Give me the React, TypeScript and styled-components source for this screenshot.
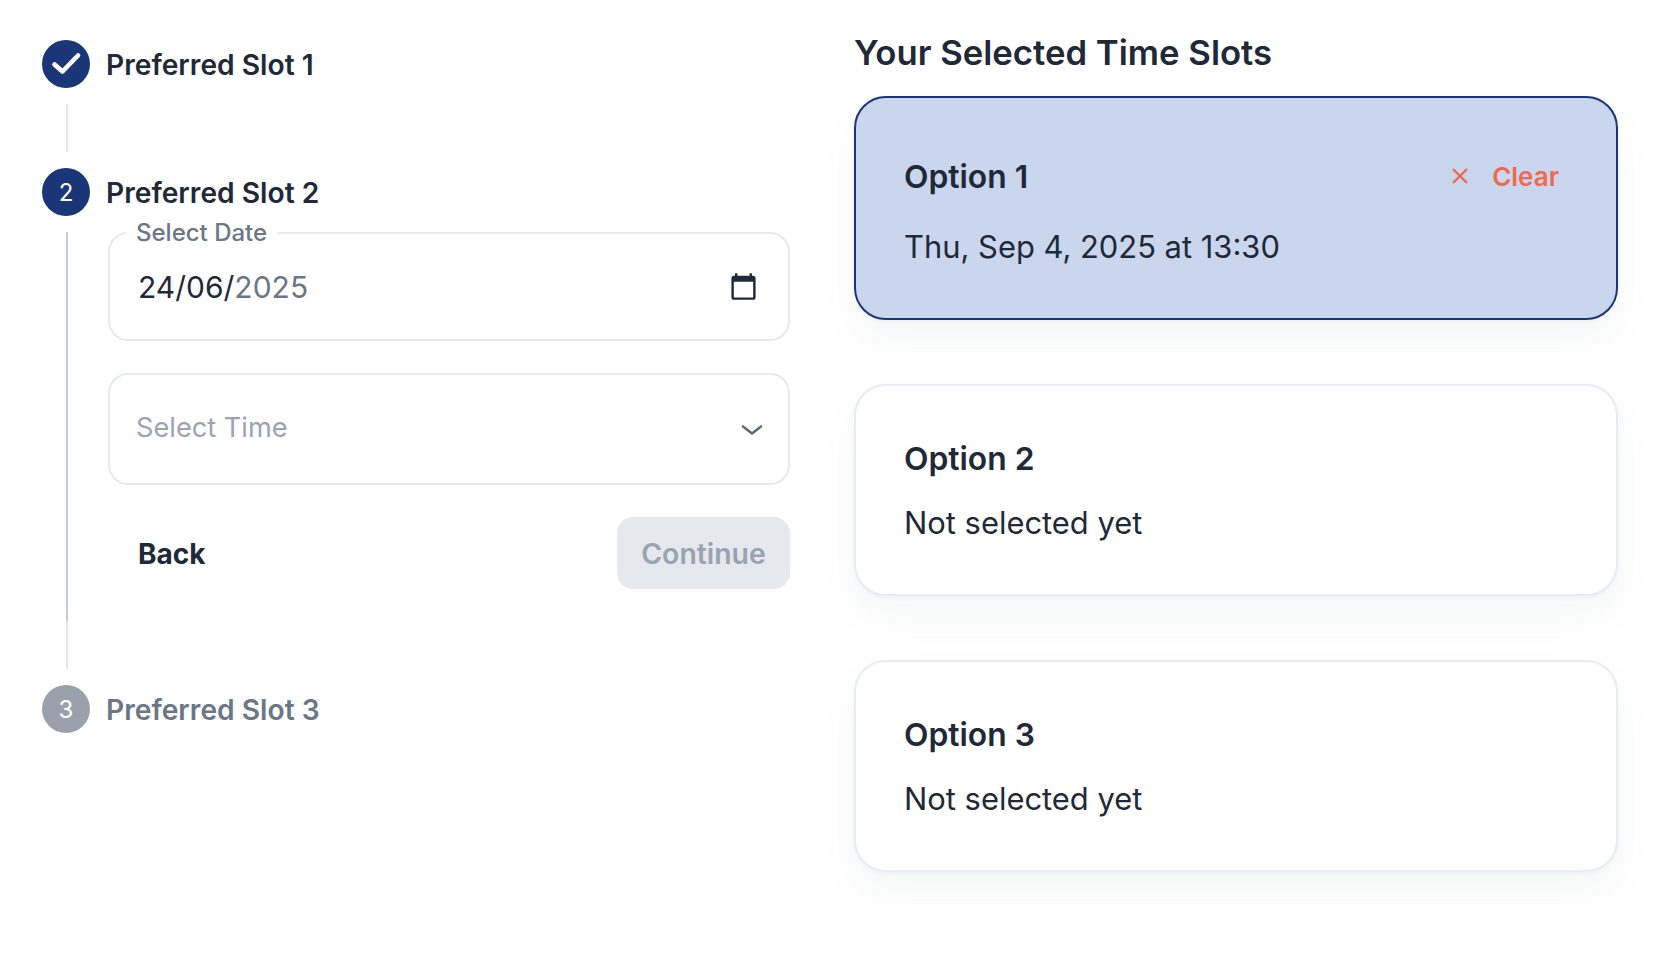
import React from 'react';
import styled, {createGlobalStyle} from 'styled-components';

const Global = createGlobalStyle`
  html, body {
    margin: 0;
    background: #fff;
  }
  * {
    box-sizing: border-box;
  }
  body {
    font-family: Inter, "Liberation Sans", sans-serif;
    color: #1f2937;
  }
`;

const Page = styled.div`
  display: grid;
  grid-template-columns: 748px 764px;
  column-gap: 64px;
  align-items: start;
  min-height: 100vh;
  padding: 32px 0 0 42px;
`;

const Stepper = styled.div`
  display: flex;
  flex-direction: column;
  padding-top: 8px;
`;

const StepHead = styled.div`
  display: flex;
  align-items: center;
  gap: 16px;
  height: 48px;
`;

const Badge = styled.div<{$muted?: boolean}>`
  width: 48px;
  height: 48px;
  border-radius: 50%;
  flex: none;
  display: flex;
  align-items: center;
  justify-content: center;
  background: ${(p) => (p.$muted ? '#9aa1ad' : '#1a3578')};
  color: #fff;
  font-size: 24px;
`;

const StepLabel = styled.div<{$muted?: boolean}>`
  padding-top: 1px;
  font-size: 28.2px;
  font-weight: 600;
  color: ${(p) => (p.$muted ? '#6b7686' : '#1f2937')};
`;

const Connector = styled.div`
  width: 2px;
  height: 48px;
  margin-left: 24px;
  background: #e4e7eb;
`;

const GappedConnector = styled(Connector)`
  margin-top: 16px;
  margin-bottom: 16px;
`;

const TailConnector = styled(Connector)`
  margin-bottom: 16px;
`;

const StepBody = styled.div`
  margin: 16px 0 0 24px;
  padding: 0 0 32px 40px;
  border-left: 2px solid #c6cad1;
  display: flex;
  flex-direction: column;
  gap: 32px;
`;

const Field = styled.div<{$height: number}>`
  position: relative;
  height: ${(p) => p.$height}px;
  border: 2px solid #e6eaef;
  border-radius: 20px;
  display: flex;
  align-items: center;
  justify-content: space-between;
`;

const Legend = styled.span`
  position: absolute;
  left: 16px;
  top: -15px;
  padding: 0 10px;
  background: #fff;
  font-size: 24px;
  line-height: 28px;
  font-weight: 500;
  color: #6b7686;
`;

const DateValue = styled.div`
  margin-left: 28px;
  font-size: 30px;
  color: #1f2937;
`;

const DateRest = styled.span`
  color: #6b7686;
`;

const Placeholder = styled.div`
  margin-left: 26px;
  padding-bottom: 4px;
  font-size: 27.2px;
  color: #9aa3b2;
`;

const CalendarIcon = styled.svg`
  width: 29px;
  height: 29px;
  margin-right: 30px;
  fill: #1f2937;
`;

const ChevronIcon = styled.svg`
  width: 22px;
  height: 10px;
  margin: 2px 25px 0 0;
  fill: none;
  stroke: #5f6b7a;
  stroke-width: 2.6;
  stroke-linecap: round;
  stroke-linejoin: round;
`;

const Actions = styled.div`
  display: flex;
  justify-content: space-between;
  align-items: center;
`;

const BackButton = styled.button`
  border: 0;
  background: none;
  padding: 1px 30px 0;
  height: 72px;
  font: 700 28px Inter, sans-serif;
  color: #1f2937;
`;

const ContinueButton = styled.button`
  border: 0;
  width: 173px;
  height: 72px;
  border-radius: 16px;
  background: #e5e8ec;
  font: 600 28.4px Inter, sans-serif;
  color: #9aa3b0;
`;

const Summary = styled.div`
  display: flex;
  flex-direction: column;
`;

const Heading = styled.h2`
  margin: 0 0 24px;
  font-size: 34.7px;
  line-height: 40px;
  font-weight: 600;
  color: #1f2937;
`;

const Cards = styled.div`
  display: flex;
  flex-direction: column;
  gap: 64px;
`;

const Card = styled.div<{$active?: boolean}>`
  padding: 54px 48px 52px;
  border: 2px solid ${(p) => (p.$active ? '#1a3578' : '#e8ebef')};
  border-radius: 32px;
  background: ${(p) => (p.$active ? '#cad6ee' : '#fff')};
  box-shadow: 0 2px 4px rgba(100, 116, 139, 0.06),
    0 20px 40px rgba(100, 116, 139, 0.06);
`;

const CardHead = styled.div`
  display: flex;
  align-items: center;
  justify-content: space-between;
`;

const CardTitle = styled.div`
  font-size: 31.8px;
  line-height: 38px;
  font-weight: 600;
  color: #1f2937;
`;

const CardText = styled.div`
  margin-top: 26px;
  font-size: 30.9px;
  line-height: 38px;
  color: #1f2937;
`;

const ClearButton = styled.button`
  display: flex;
  align-items: center;
  gap: 23px;
  height: 50px;
  padding: 0 9px 2px 0;
  border: 0;
  background: none;
  font: 600 26px Inter, sans-serif;
  color: #ee6a4d;
`;

const ClearIcon = styled.svg`
  width: 18px;
  height: 18px;
  fill: none;
  stroke: #ee6a4d;
  stroke-width: 2.4;
`;

const Check = styled.svg`
  width: 48px;
  height: 48px;
  fill: none;
  stroke: #fff;
  stroke-width: 4.6;
  stroke-linecap: round;
  stroke-linejoin: round;
`;

const options = [
  {title: 'Option 1', text: 'Thu, Sep 4, 2025 at 13:30', active: true},
  {title: 'Option 2', text: 'Not selected yet', active: false},
  {title: 'Option 3', text: 'Not selected yet', active: false},
];

export default function App() {
  return (
    <Page>
      <Global />
      <Stepper>
        <StepHead>
          <Badge>
            <Check viewBox="0 0 48 48">
              <path d="M12.5 24.5l8 7 15.5-16" />
            </Check>
          </Badge>
          <StepLabel>Preferred Slot 1</StepLabel>
        </StepHead>
        <GappedConnector />
        <StepHead>
          <Badge>2</Badge>
          <StepLabel>Preferred Slot 2</StepLabel>
        </StepHead>
        <StepBody>
          <Field $height={109}>
            <Legend>Select Date</Legend>
            <DateValue>
              24/06/<DateRest>2025</DateRest>
            </DateValue>
            <CalendarIcon viewBox="0 0 24 24">
              <path d="M20 3h-1V1h-2v2H7V1H5v2H4c-1.1 0-2 .9-2 2v16c0 1.1.9 2 2 2h16c1.1 0 2-.9 2-2V5c0-1.1-.9-2-2-2zm0 18H4V8h16v13z" />
            </CalendarIcon>
          </Field>
          <Field $height={112}>
            <Placeholder>Select Time</Placeholder>
            <ChevronIcon viewBox="0 0 22 10">
              <path d="M2 1.5l9 7 9-7" />
            </ChevronIcon>
          </Field>
          <Actions>
            <BackButton>Back</BackButton>
            <ContinueButton disabled>Continue</ContinueButton>
          </Actions>
        </StepBody>
        <TailConnector />
        <StepHead>
          <Badge $muted>3</Badge>
          <StepLabel $muted>Preferred Slot 3</StepLabel>
        </StepHead>
      </Stepper>
      <Summary>
        <Heading>Your Selected Time Slots</Heading>
        <Cards>
          {options.map((o) => (
            <Card key={o.title} $active={o.active}>
              <CardHead>
                <CardTitle>{o.title}</CardTitle>
                {o.active && (
                  <ClearButton>
                    <ClearIcon viewBox="0 0 18 18">
                      <path d="M2 2l14 14M16 2L2 16" />
                    </ClearIcon>
                    Clear
                  </ClearButton>
                )}
              </CardHead>
              <CardText>{o.text}</CardText>
            </Card>
          ))}
        </Cards>
      </Summary>
    </Page>
  );
}
